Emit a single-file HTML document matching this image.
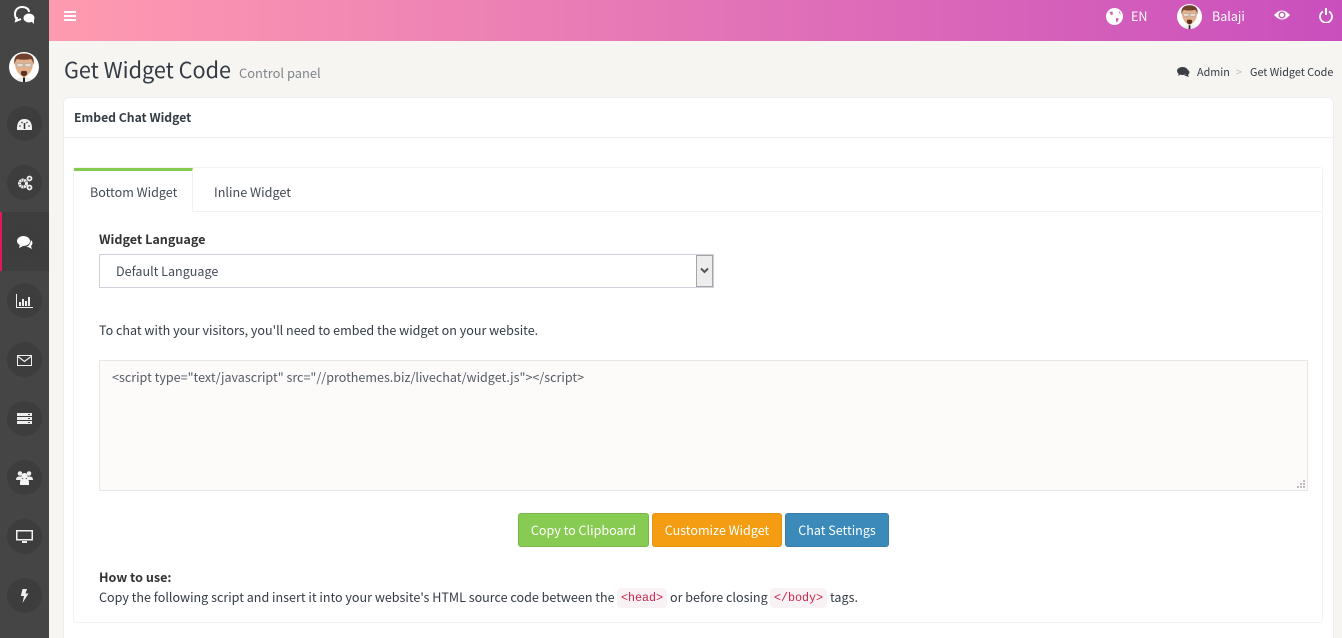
<!DOCTYPE html>
<html style="width:1342px;height:638px;overflow:hidden"><head><meta charset="utf-8"><style>
*{box-sizing:border-box}
html,body{margin:0;padding:0}
body{width:1342px;height:638px;overflow:hidden;position:relative;background:#f6f5f2;font-family:"Noto Sans CJK SC","Liberation Sans",sans-serif;font-size:12.55px;color:#333b45}
.a{position:absolute;white-space:nowrap;line-height:20px}
.side{position:absolute;left:0;top:0;width:49px;height:638px;background:#454545}
.c{position:absolute;left:7px;width:35px;height:35px;border-radius:50%;background:#3d3d3d}
.ic{position:absolute}
.top{position:absolute;left:49px;top:0;width:1293px;height:41px;background:linear-gradient(to right,#ff9bb0,#c94fbd)}
.btn{position:absolute;top:513px;height:34px;border-radius:3px;color:#fff;text-align:center;line-height:31px;font-size:12.55px;border:1px solid}
code{font-family:"Liberation Mono","DejaVu Sans Mono",monospace;font-size:11.7px;color:#c7254e;background:#f9f2f4;border-radius:4px;position:absolute;height:20px;line-height:21px;text-align:center}
</style></head><body>
<svg width="0" height="0" style="position:absolute"><defs>
<g id="av">
<circle cx="15" cy="15" r="15" fill="#fff"/>
<path d="M7 27q8-4 16 0l-2 2q-6 2-12 0z" fill="#eeeeee"/>
<path d="M14 25.500h2V30h-2z" fill="#222"/>
<path d="M6 11q0-8 9-8t9 8q0 10-9 14.500Q6 21 6 11z" fill="#e3b08c"/>
<path d="M5.500 13Q3.500 1.500 15 1.500T24.500 13q-.5-4-2.500-6q-7 1.500-14 0q-2 2-2.500 6z" fill="#70412d"/>
<rect x="8" y="11.500" width="6" height="3.200" fill="#e8dcd2" stroke="#a8a8a8" stroke-width=".6"/>
<rect x="16" y="11.500" width="6" height="3.200" fill="#e8dcd2" stroke="#a8a8a8" stroke-width=".6"/>
<path d="M12 19.500q3-1.500 6 0q.5 3-1 4q-2 1.300-4 0q-1.500-1-1-4z" fill="#5a3224"/>
</g>
</defs></svg>
<div class="side"></div>
<div style="position:absolute;left:0;top:212px;width:49px;height:59px;background:#3e3e3e"></div>
<div style="position:absolute;left:0;top:212px;width:2px;height:59px;background:#e0195c"></div>
<svg class="ic" style="left:13px;top:5px" width="23" height="20" viewBox="0 0 23 20"><path d="M9 2c4 0 7 2 7 5 M5 15c-2-1-3-3-3-6c0-4 3-7 7-7 M4 12l-1 4l5-2" fill="none" stroke="#fff" stroke-width="2"/><ellipse cx="16" cy="13" rx="5.500" ry="4.500" fill="#fff"/><path d="M18 16l3 3l0-5z" fill="#fff"/></svg>
<svg class="ic" style="left:9px;top:52px" width="30" height="32" viewBox="0 0 30 32"><use href="#av"/></svg>
<div class="c" style="top:106px"></div><div class="c" style="top:165px"></div><div class="c" style="top:224px"></div><div class="c" style="top:283px"></div><div class="c" style="top:342px"></div><div class="c" style="top:401px"></div><div class="c" style="top:460px"></div><div class="c" style="top:519px"></div><div class="c" style="top:578px"></div>
<svg class="ic" style="left:17px;top:119px" width="15" height="11" viewBox="0 0 15 11"><path d="M0 11Q-.5 0 7.500 0T15 11z" fill="#f2f2f2"/><path d="M7.500 4v6" stroke="#333" stroke-width="1.600"/><circle cx="3" cy="7" r=".9" fill="#555"/><circle cx="12" cy="7" r=".9" fill="#555"/><circle cx="5" cy="3.500" r=".9" fill="#555"/><circle cx="10" cy="3.500" r=".9" fill="#555"/></svg>
<svg class="ic" style="left:17px;top:175px" width="16" height="16" viewBox="0 0 16 16"><circle cx="6" cy="8.500" r="3.500" fill="none" stroke="#eee" stroke-width="3" stroke-dasharray="2 .5"/><circle cx="12.500" cy="3.500" r="2" fill="none" stroke="#eee" stroke-width="1.800"/><circle cx="12.500" cy="12.500" r="2" fill="none" stroke="#eee" stroke-width="1.800"/></svg>
<svg class="ic" style="left:17px;top:236px" width="16" height="13" viewBox="0 0 16 13"><ellipse cx="6.500" cy="5" rx="6.500" ry="5" fill="#fff"/><path d="M3 8l-1 4l4-2zM14 4q3 3 0 6l1 3l-4-2l-2 0q4-1 5-7z" fill="#fff"/></svg>
<svg class="ic" style="left:16px;top:294px" width="17" height="14" viewBox="0 0 17 14"><path d="M.5 0v13.500H17" fill="none" stroke="#eee"/><path d="M3 8h2v4H3zM6 5h2v7H6zM9 7h2v5H9zM12 3h2v9h-2z" fill="#eee"/></svg>
<svg class="ic" style="left:17px;top:355px" width="15" height="11" viewBox="0 0 15 11"><rect x=".5" y=".5" width="14" height="10" fill="none" stroke="#f0f0f0"/><path d="M1 1.500l6.500 5l6.500-5" fill="none" stroke="#f0f0f0" stroke-width="1.200"/></svg>
<svg class="ic" style="left:17px;top:413px" width="15" height="11" viewBox="0 0 15 11"><path d="M0 0h15v3H0zM0 4h15v3H0zM0 8h15v3H0z" fill="#eee"/><path d="M11 1h2v1h-2zM11 5h2v1h-2zM11 9h2v1h-2z" fill="#444"/></svg>
<svg class="ic" style="left:16px;top:471px" width="17" height="14" viewBox="0 0 17 14"><circle cx="4" cy="2.500" r="2.300" fill="#eee"/><circle cx="13" cy="2.500" r="2.300" fill="#eee"/><path d="M0 9q0-3.500 3-3.500h3V9zM17 9q0-3.500-3-3.500h-3V9z" fill="#eee"/><circle cx="8.500" cy="5" r="3" fill="#f5f5f5"/><path d="M4 14v-3q0-3 3-3h3q3 0 3 3v3z" fill="#f5f5f5"/></svg>
<svg class="ic" style="left:16px;top:530px" width="17" height="13" viewBox="0 0 17 13"><rect x=".75" y=".75" width="15.500" height="9" fill="none" stroke="#f2f2f2" stroke-width="1.500"/><path d="M6 11h5v2H6z" fill="#eee"/></svg>
<svg class="ic" style="left:20px;top:589px" width="9" height="14" viewBox="0 0 9 14"><path d="M2.500 0H7L5.500 4.500H8.500L2.500 14L4 7H.8z" fill="#f0f0f0"/></svg>

<div class="top"></div>
<svg class="ic" style="left:64px;top:11px" width="12" height="10" viewBox="0 0 12 10"><path d="M0 0h12v2H0zM0 4h12v2H0zM0 8h12v2H0z" fill="#fff"/></svg>
<svg class="ic" style="left:1106px;top:8px" width="17" height="17" viewBox="0 0 17 17"><circle cx="8.500" cy="8.500" r="8.500" fill="#fff"/><path d="M3.500 4l3-.5l.5 3l-2 .5zM10 10l3 .5l-2 4l-1-1zM13 3l2 3l-2-1z" fill="#d05fb8"/></svg>
<div class="a" style="left:1131px;top:6px;color:#fff">EN</div>
<svg class="ic" style="left:1177px;top:4px" width="25" height="25" viewBox="0 0 30 30"><use href="#av"/></svg>
<div class="a" style="left:1212px;top:6px;color:#fff">Balaji</div>
<svg class="ic" style="left:1274px;top:9px" width="16" height="12" viewBox="0 0 16 12"><path d="M0 6Q8-3 16 6Q8 15 0 6z" fill="#fff"/><circle cx="8" cy="6" r="3.500" fill="#cb5cb9"/><circle cx="8" cy="6" r="2" fill="#fff"/></svg>
<svg class="ic" style="left:1319px;top:8px" width="14" height="15" viewBox="0 0 14 15"><path d="M4 3.500a6 6 0 1 0 6 0" fill="none" stroke="#fff" stroke-width="1.800"/><path d="M7 0v7" stroke="#fff" stroke-width="2"/></svg>

<div class="a" style="left:64px;top:55px;font-size:21.650px;line-height:30px;color:#333b45">Get Widget Code</div>
<div class="a" style="left:239px;top:63px;font-size:12.900px;color:#7f858c">Control panel</div>
<svg class="ic" style="left:1177px;top:67px" width="13" height="10" viewBox="0 0 13 10"><ellipse cx="5.500" cy="4" rx="5.500" ry="4" fill="#3b3f45"/><path d="M2 6l-1 3l3-2zM11 3q3 2 0 5l1 2l-3-1l-2-.5q3-1 4-5.500z" fill="#3b3f45"/></svg>
<div class="a" style="left:1197px;top:62px;font-size:10.800px">Admin</div>
<div class="a" style="left:1236px;top:62px;font-size:10.800px;color:#b9bbbd">&gt;</div>
<div class="a" style="left:1250px;top:62px;font-size:10.800px">Get Widget Code</div>

<div style="position:absolute;left:63px;top:97px;width:1271px;height:541px;background:#fff;border:1px solid #eeeeee;border-bottom:0;border-radius:6px 6px 0 0"></div>
<div class="a" style="left:74px;top:107px;font-size:12.200px;font-weight:700">Embed Chat Widget</div>
<div style="position:absolute;left:64px;top:137px;width:1269px;height:1px;background:#f1f1f1"></div>

<div style="position:absolute;left:73px;top:167px;width:1250px;height:456px;border:1px solid #f2f2f2;border-radius:3px"></div>
<div style="position:absolute;left:74px;top:211px;width:1248px;height:1px;background:#f1f1f1"></div>
<div style="position:absolute;left:74px;top:168px;width:119px;height:44px;background:#fff;border-top:3px solid #84cb4f;border-right:1px solid #f1f1f1"></div>
<div class="a" style="left:90px;top:182px;color:#444b55">Bottom Widget</div>
<div class="a" style="left:214px;top:182px;font-size:12.650px;color:#444b55">Inline Widget</div>

<div class="a" style="left:99px;top:229px;font-size:12.600px;font-weight:700;color:#333">Widget Language</div>
<div style="position:absolute;left:99px;top:254px;width:615px;height:34px;background:#fff;border:1px solid #cfd2da"></div>
<div style="position:absolute;left:696px;top:255px;width:17px;height:32px;background:#ededed;border:1px solid #a5a5a5"></div>
<svg class="ic" style="left:700px;top:267px" width="9" height="8" viewBox="0 0 9 8"><path d="M1 1.500l3.500 3.500l3.500-3.500" fill="none" stroke="#555" stroke-width="2"/></svg>
<div class="a" style="left:116px;top:261px;color:#444b55">Default Language</div>

<div class="a" style="left:99px;top:320px">To chat with your visitors, you'll need to embed the widget on your website.</div>

<div style="position:absolute;left:99px;top:360px;width:1209px;height:131px;background:#fcfbf9;border:1px solid #e6e6e6"></div>
<div class="a" style="left:112px;top:367px;color:#555c66">&lt;script type="text/javascript" src="//prothemes.biz/livechat/widget.js"&gt;&lt;/script&gt;</div>
<svg class="ic" style="left:1296px;top:479px" width="10" height="10" viewBox="0 0 10 10"><path d="M7 1h2v2H7zM4 4h2v2H4zM7 4h2v2H7zM1 7h2v2H1zM4 7h2v2H4zM7 7h2v2H7z" fill="#bdbdbd"/></svg>

<div class="btn" style="left:518px;width:131px;background:#87cb52;border-color:#77b846">Copy to Clipboard</div>
<div class="btn" style="left:652px;width:130px;background:#f49d12;border-color:#e49110">Customize Widget</div>
<div class="btn" style="left:785px;width:104px;background:#3c8ab9;border-color:#367fad">Chat Settings</div>

<div class="a" style="left:99px;top:567px;font-size:12.600px;font-weight:700;color:#333">How to use:</div>
<div class="a" style="left:99px;top:587px">Copy the following script and insert it into your website's HTML source code between the</div>
<code style="left:617px;top:588px;width:50px">&lt;head&gt;</code>
<div class="a" style="left:670px;top:587px">or before closing</div>
<code style="left:770px;top:588px;width:57px">&lt;/body&gt;</code>
<div class="a" style="left:830px;top:587px">tags.</div>
</body></html>
